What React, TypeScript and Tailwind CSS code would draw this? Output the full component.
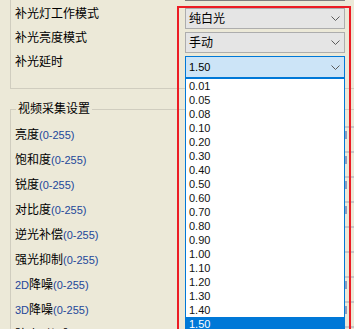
import React from "react";

const delayValues = [
  "0.01", "0.05", "0.08", "0.10", "0.20", "0.30", "0.40", "0.50", "0.60",
  "0.70", "0.80", "0.90", "1.00", "1.10", "1.20", "1.30", "1.40", "1.50",
];

type Part = { text: string; latin?: boolean };

const videoRows: { parts: Part[]; mark: boolean }[] = [
  { parts: [{ text: "亮度" }, { text: "(0-255)", latin: true }], mark: true },
  { parts: [{ text: "饱和度" }, { text: "(0-255)", latin: true }], mark: true },
  { parts: [{ text: "锐度" }, { text: "(0-255)", latin: true }], mark: true },
  { parts: [{ text: "对比度" }, { text: "(0-255)", latin: true }], mark: true },
  { parts: [{ text: "逆光补偿" }, { text: "(0-255)", latin: true }], mark: false },
  { parts: [{ text: "强光抑制" }, { text: "(0-255)", latin: true }], mark: false },
  {
    parts: [{ text: "2D", latin: true }, { text: "降噪" }, { text: "(0-255)", latin: true }],
    mark: true,
  },
  {
    parts: [{ text: "3D", latin: true }, { text: "降噪" }, { text: "(0-255)", latin: true }],
    mark: true,
  },
  { parts: [{ text: "防止时间隔" }], mark: true },
];

function Chevron() {
  return (
    <svg width="9" height="5" viewBox="0 0 9 5" className="shrink-0">
      <polyline points="0.5,0.5 4.5,4.5 8.5,0.5" fill="none" stroke="#5a5a5a" strokeWidth="1" />
    </svg>
  );
}

function Combo({ value, latin, focused }: { value: string; latin?: boolean; focused?: boolean }) {
  return (
    <div
      className={
        focused
          ? "flex h-[22px] w-[160px] items-center justify-between border border-[#0078d7] bg-[#cce4f7] pl-[3px] pr-[4px]"
          : "flex h-[21px] w-[160px] items-center justify-between border border-[#adadad] bg-[#e5e5e5] pl-[3px] pr-[4px]"
      }
    >
      <span className={latin ? "text-[11px] leading-[14px]" : "text-[12px] leading-[16px]"}>{value}</span>
      <Chevron />
    </div>
  );
}

export default function App() {
  return (
    <div className="relative h-[329px] w-[354px] overflow-hidden bg-[#ece9d8] font-['Liberation_Sans','Noto_Sans_CJK_SC',sans-serif] text-black">
      {/* fill light group */}
      <div className="ml-[10px] h-[89px] w-[400px] border-b border-l border-[#d0cdbf]">
        <div className="ml-[174px] h-px w-[160px] bg-[#7d7d7d]" />
        <div className="pt-[5px]">
          <div className="flex h-[24px] items-start">
            <span className="w-[174px] shrink-0 pl-[4px] text-[12px] leading-[16px]">补光灯工作模式</span>
            <div className="mt-[2px]">
              <Combo value="纯白光" />
            </div>
          </div>
          <div className="flex h-[24px] items-start">
            <span className="w-[174px] shrink-0 pl-[4px] text-[12px] leading-[16px]">补光亮度模式</span>
            <div className="mt-[2px]">
              <Combo value="手动" />
            </div>
          </div>
          <div className="flex h-[24px] items-start">
            <span className="w-[174px] shrink-0 pl-[4px] text-[12px] leading-[16px]">补光延时</span>
            <div className="relative z-10 mt-[2px]">
              <Combo value="1.50" latin focused />
              <ul className="absolute left-0 top-[22px] w-[160px] border border-[#0078d7] bg-white">
                {delayValues.map((v) => (
                  <li
                    key={v}
                    className={
                      v === "1.50"
                        ? "h-[14px] bg-[#0078d7] pl-[3px] text-[11px] leading-[14px] text-white"
                        : "h-[14px] pl-[3px] text-[11px] leading-[14px] text-[#111]"
                    }
                  >
                    {v}
                  </li>
                ))}
              </ul>
            </div>
          </div>
        </div>
      </div>

      {/* video capture group */}
      <fieldset className="ml-[10px] mt-[12px] w-[400px] min-w-0 border-l border-t border-[#d0cdbf]">
        <legend className="ml-[5px] px-[2px] text-[12px] leading-[16px]">视频采集设置</legend>
        <div className="pt-[4px]">
          {videoRows.map((row, i) => (
            <div key={i} className="flex h-[25px] items-start">
              <span className="w-[174px] shrink-0 pl-[4px] leading-[25px]">
                {row.parts.map((p, j) =>
                  p.latin ? (
                    <span key={j} className="text-[11px] text-[#23479a]">
                      {p.text}
                    </span>
                  ) : (
                    <span key={j} className="text-[12px]">
                      {p.text}
                    </span>
                  ),
                )}
              </span>
              <div className="mt-[5px] h-[20px] w-[200px] shrink-0 border-t-2 border-[#c6c6c6]">
                {row.mark && <div className="ml-[160px] mt-[3px] h-[8px] w-[2px] bg-[#8d9bbb]" />}
              </div>
            </div>
          ))}
        </div>
      </fieldset>

      {/* annotation frame */}
      <div className="pointer-events-none absolute left-[177px] top-[6px] z-20 h-[400px] w-[174px] border-2 border-[#ec1c24]" />
    </div>
  );
}
